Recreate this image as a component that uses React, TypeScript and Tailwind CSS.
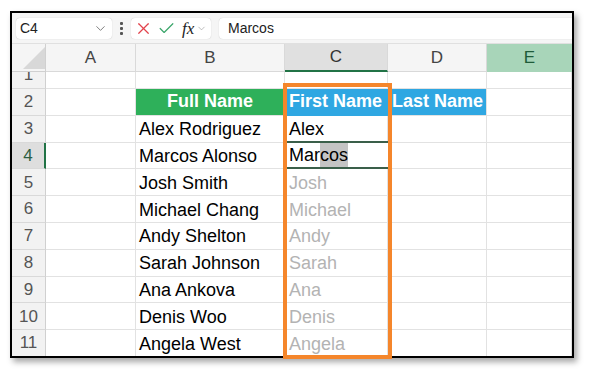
import React from 'react';
import { ChevronDown, X, Check } from 'lucide-react';

const font = { fontFamily: '"Liberation Sans", Arial, sans-serif' };

const names = [
  'Alex Rodriguez',
  'Marcos Alonso',
  'Josh Smith',
  'Michael Chang',
  'Andy Shelton',
  'Sarah Johnson',
  'Ana Ankova',
  'Denis Woo',
  'Angela West',
];

const Cell: React.FC<{ className?: string; children?: React.ReactNode }> = ({ className = '', children }) => (
  <div className={`h-full flex items-center border-r border-b border-[#e2e2e2] overflow-hidden whitespace-nowrap ${className}`}>
    {children}
  </div>
);

const Row: React.FC<{ n: number; children?: React.ReactNode; active?: boolean }> = ({ n, children, active }) => (
  <div className="grid grid-cols-[34px_90px_149px_103px_99px_1fr] h-[26.8px] shrink-0">
    <div
      className={`h-full flex items-center justify-center text-[17px] border-b border-[#d9d9d9] ${
        active ? 'bg-[#dedede] text-[#2d5e43] border-r-2 border-r-[#217346]' : 'bg-[#f2f2f2] text-[#555] border-r border-r-[#d0d0d0]'
      }`}
    >
      {n}
    </div>
    {children}
  </div>
);

export default function App() {
  return (
    <div className="w-[589px] h-[372px] bg-white relative pt-[11px] pl-[10px]" style={font}>
      <div className="w-[564px] h-[347px] border-2 border-black shadow-[3px_4px_6px_rgba(0,0,0,0.35)] overflow-hidden flex flex-col bg-white">
        {/* Formula bar */}
        <div className="h-[31px] shrink-0 bg-[#f5f5f5] flex items-center pl-[4px] gap-[8px] border-b border-[#e0e0e0]">
          <div className="w-[96px] h-[21px] bg-white rounded-[4px] shadow-[0_0_1px_rgba(0,0,0,0.25)] flex items-center justify-between pl-[4px] pr-[4px] text-[14px] text-[#222]">
            <span>C4</span>
            <ChevronDown size={15} strokeWidth={1.2} className="text-[#555]" />
          </div>
          <div className="flex flex-col gap-[2px] w-[3px]">
            <span className="w-[3px] h-[3px] bg-[#555] rounded-[1px]" />
            <span className="w-[3px] h-[3px] bg-[#555] rounded-[1px]" />
            <span className="w-[3px] h-[3px] bg-[#555] rounded-[1px]" />
          </div>
          <div className="w-[80px] h-[21px] bg-white rounded-[4px] shadow-[0_0_1px_rgba(0,0,0,0.25)] flex items-center pl-[3px] gap-[4px]">
            <X size={19} strokeWidth={1.5} color="#e2434c" />
            <Check size={19} strokeWidth={1.5} color="#3aa56a" />
            <span className="text-[17px] italic text-[#222] leading-none ml-[2px]" style={{ fontFamily: '"Liberation Serif", serif' }}>
              fx
            </span>
            <ChevronDown size={11} strokeWidth={1.2} className="text-[#888] -ml-[2px]" />
          </div>
          <div className="flex-1 h-[21px] bg-white rounded-l-[4px] shadow-[0_0_1px_rgba(0,0,0,0.25)] flex items-center pl-[9px] text-[14px] text-[#222]">
            Marcos
          </div>
        </div>

        {/* Column headers */}
        <div className="grid grid-cols-[34px_90px_149px_103px_99px_1fr] h-[28px] shrink-0 text-[17px] text-[#444] bg-[#f5f5f5]">
          <div className="relative border-r border-b border-[#d0d0d0]">
            <svg className="absolute right-[0px] bottom-[2px]" width="24" height="22" viewBox="0 0 24 22">
              <polygon points="24,0 24,22 2,22" fill="#d8d8d8" />
            </svg>
          </div>
          <div className="flex items-center justify-center border-r border-b border-[#d9d9d9]">A</div>
          <div className="flex items-center justify-center border-r border-b border-[#d9d9d9]">B</div>
          <div className="flex items-center justify-center bg-[#e0e0e0] border-r border-[#d9d9d9] border-b-2 border-b-[#217346] text-[#333]">C</div>
          <div className="flex items-center justify-center border-r border-b border-[#d9d9d9]">D</div>
          <div className="flex items-center justify-center bg-[#a8d5b9] border-b border-[#a8d5b9] text-[#1f5b39]">E</div>
        </div>

        {/* Grid */}
        <div className="flex-1 overflow-hidden">
          <div className="flex flex-col -mt-[9.8px] text-[18px] text-black">
            <Row n={1}>
              <Cell />
              <Cell />
              <Cell />
              <Cell />
              <Cell />
            </Row>
            <Row n={2}>
              <Cell />
              <Cell className="justify-center bg-[#2eb05a] border-[#2eb05a] text-white font-bold">Full Name</Cell>
              <Cell className="pl-[4px] bg-[#2fa7e2] border-b-[#2fa7e2] border-r-[#2fa7e2] text-white font-bold">First Name</Cell>
              <Cell className="pl-[4px] bg-[#2fa7e2] border-[#2fa7e2] text-white font-bold">Last Name</Cell>
              <Cell />
            </Row>
            {names.map((name, i) => {
              const first = name.split(' ')[0];
              const active = i === 1;
              return (
                <Row key={name} n={i + 3} active={active}>
                  <Cell />
                  <Cell className="pl-[3px] pt-[2px]">{name}</Cell>
                  {active ? (
                    <div className="flex items-center pl-[4px] border-t-2 border-b-2 border-[#3a5f4a] box-border -mt-[1.5px] h-[28.3px]">
                      <span>Mar</span>
                      <span className="bg-[#c4c4c4] h-[24px] flex items-center">cos</span>
                    </div>
                  ) : (
                    <Cell className={`pl-[4px] pt-[2px] ${i === 0 ? 'text-black' : 'text-[#b3b3b3]'}`}>{first}</Cell>
                  )}
                  <Cell />
                  <Cell />
                </Row>
              );
            })}
          </div>
        </div>
      </div>

      {/* Orange highlight around column C */}
      <div className="absolute left-[283px] top-[83px] w-[109px] h-[276px] border-4 border-[#f5862b]" />
    </div>
  );
}
